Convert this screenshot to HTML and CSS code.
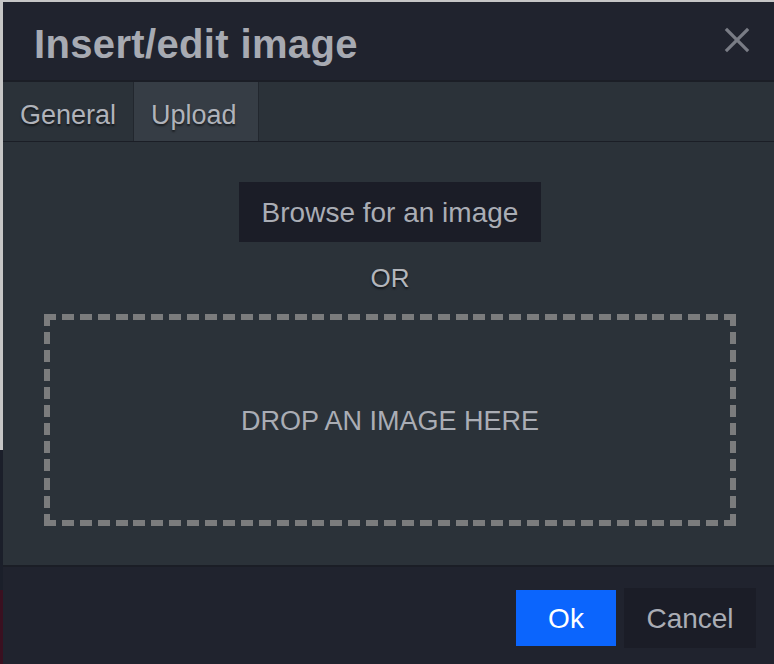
FILE: index.html
```html
<!DOCTYPE html>
<html lang="en">
<head>
    <meta charset="UTF-8">
    <meta name="viewport" content="width=device-width, initial-scale=1.0">
    <title>Insert/edit image</title>
    <link rel="stylesheet" href="styles.css">
</head>
<body>
<div class="dialog">
    <div class="dialog-header">
        <h1>Insert/edit image</h1>
        <span class="close-btn">
            <svg xmlns="http://www.w3.org/2000/svg" width="26" height="26" viewBox="0 0 26 26" fill="none" stroke="currentColor" stroke-width="3.2" stroke-linecap="square">
                <line x1="3" y1="3" x2="23" y2="23"></line>
                <line x1="23" y1="3" x2="3" y2="23"></line>
            </svg>
        </span>
    </div>

    <div class="tabs">
        <div class="tab">General</div>
        <div class="tab active">Upload</div>
    </div>

    <div class="dialog-body">
        <button class="browse-btn" type="button">Browse for an image</button>
        <div class="or-text">OR</div>
        <div class="dropzone">DROP AN IMAGE HERE</div>
    </div>

    <div class="dialog-footer">
        <button class="btn btn-primary" type="button">Ok</button>
        <button class="btn btn-secondary" type="button">Cancel</button>
    </div>
</div>
</body>
</html>
```

FILE: styles.css
```css
:root {
    --header-bg: #20232e;
    --line-color: #1b1e26;
    --panel-bg: #2b3239;
    --tab-active: #363d45;
    --text-color: #aaadb5;
    --dark-btn: #1b1d27;
    --primary-color: #0b65fd;
    --dash-color: #7b7c7d;
}

* {
    box-sizing: border-box;
    margin: 0;
    padding: 0;
}

html, body {
    height: 100%;
    overflow: hidden;
}

body {
    font-family: "Liberation Sans", Arial, sans-serif;
    background: linear-gradient(#c6c6c6 0 450px, #1b1f2a 450px 590px, #3a1020 590px);
    padding: 2px 0 0 3px;
    color: var(--text-color);
}

.dialog {
    width: 774px;
    height: 700px;
    background-color: var(--header-bg);
}

.dialog-header {
    height: 80px;
    display: flex;
    align-items: center;
    justify-content: space-between;
    padding: 0 24px 0 31px;
    border-bottom: 2px solid var(--line-color);
}

.dialog-header h1 {
    font-size: 40px;
    font-weight: 700;
    color: #a7aab2;
    letter-spacing: 0.35px;
    line-height: 1;
    padding-top: 5px;
}

.close-btn {
    color: #797c85;
    display: flex;
    margin-right: 3px;
    margin-top: -2px;
}

.tabs {
    display: flex;
    height: 60px;
    background-color: var(--panel-bg);
    border-bottom: 1px solid var(--line-color);
}

.tab {
    font-size: 27px;
    line-height: 57px;
    padding: 5px 16px 0 17px;
    border-right: 1px solid #22272e;
    color: #b0b3ba;
    text-shadow: 0 2px 2px rgba(0, 0, 0, 0.55);
}

.tab:first-child {
    width: 131px;
}

.tab.active {
    width: 125px;
    background-color: var(--tab-active);
}

.dialog-body {
    background-color: var(--panel-bg);
    display: flex;
    flex-direction: column;
    align-items: center;
    padding: 40px 41px 39px 41px;
    border-bottom: 2px solid var(--line-color);
}

.browse-btn {
    background-color: var(--dark-btn);
    color: var(--text-color);
    border: none;
    font-family: inherit;
    font-size: 28px;
    height: 60px;
    width: 302px;
    padding-top: 1px;
}

.or-text {
    font-size: 26px;
    line-height: 72px;
    color: #b3b6bc;
    text-shadow: 0 2px 2px rgba(0, 0, 0, 0.55);
}

/* dashed frame drawn with gradients so the dashes match 12px on / 6px off */
.dropzone {
    width: 692px;
    height: 212px;
    display: flex;
    align-items: center;
    justify-content: center;
    padding-top: 2px;
    font-size: 27px;
    color: var(--text-color);
    background:
        repeating-linear-gradient(to right, var(--dash-color) 0 12px, transparent 12px 17.895px) top left / 100% 6px no-repeat,
        repeating-linear-gradient(to right, var(--dash-color) 0 12px, transparent 12px 17.895px) bottom left / 100% 6px no-repeat,
        repeating-linear-gradient(to bottom, var(--dash-color) 0 12px, transparent 12px 18.18px) top left / 6px 100% no-repeat,
        repeating-linear-gradient(to bottom, var(--dash-color) 0 12px, transparent 12px 18.18px) top right / 6px 100% no-repeat;
}

.dialog-footer {
    display: flex;
    justify-content: flex-end;
    align-items: flex-start;
    gap: 8px;
    padding: 21px 21px 0 0;
}

.btn {
    border: none;
    font-family: inherit;
    font-size: 28px;
    padding-top: 2px;
}

.btn-primary {
    background-color: var(--primary-color);
    color: #ffffff;
    width: 100px;
    height: 56px;
    margin-top: 2px;
}

.btn-secondary {
    background-color: var(--dark-btn);
    color: var(--text-color);
    width: 132px;
    height: 60px;
}
```
